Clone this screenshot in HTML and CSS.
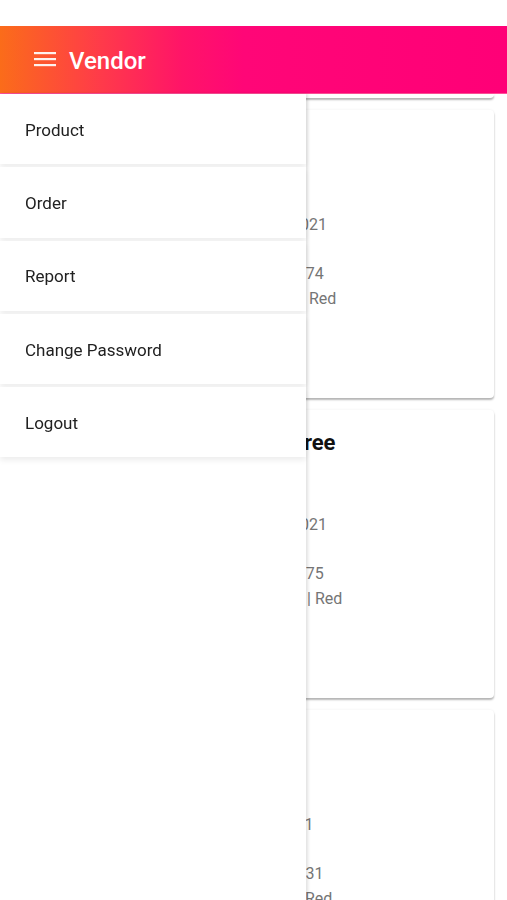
FILE: index.html
```html
<!DOCTYPE html>
<html lang="en">
<head>
    <meta charset="UTF-8">
    <meta name="viewport" content="width=device-width, initial-scale=1.0">
    <title>Vendor</title>
    <link rel="stylesheet" href="styles.css">
</head>
<body>
    <div class="status-bar"></div>

    <header class="app-bar">
        <span class="menu-icon">
            <svg width="22" height="16" viewBox="0 0 22 16">
                <rect x="0" y="0" width="22" height="2.2" fill="#fff" />
                <rect x="0" y="6" width="22" height="2.2" fill="#fff" />
                <rect x="0" y="12" width="22" height="2.2" fill="#fff" />
            </svg>
        </span>
        <span class="app-title">Vendor</span>
    </header>

    <!-- Lista de pedidos (queda detrás del menú) -->
    <main class="order-list">
        <div class="card card-cut"></div>

        <div class="card">
            <div class="thumb"></div>
            <div class="info">
                <h3 class="info-title">Lehenga</h3>
                <p class="info-line date">Date: 22/02/2021</p>
                <p class="info-line">Amount: Rs.1274</p>
                <p class="info-line">Size : 5 Meter | Red</p>
            </div>
        </div>

        <div class="card">
            <div class="thumb"></div>
            <div class="info">
                <h3 class="info-title">Printed Saree</h3>
                <p class="info-line date">Date: 24/02/2021</p>
                <p class="info-line">Amount: Rs.1275</p>
                <p class="info-line">Size: Free Size | Red</p>
            </div>
        </div>

        <div class="card">
            <div class="thumb"></div>
            <div class="info">
                <h3 class="info-title">Kurti</h3>
                <p class="info-line date">Date: 15-3-2021</p>
                <p class="info-line">Amount: Rs 1231</p>
                <p class="info-line">Size: 6 Meter | Red</p>
            </div>
        </div>
    </main>

    <!-- Menú lateral -->
    <nav class="drawer">
        <a class="drawer-item" href="#">Product</a>
        <a class="drawer-item" href="#">Order</a>
        <a class="drawer-item" href="#">Report</a>
        <a class="drawer-item" href="#">Change Password</a>
        <a class="drawer-item" href="#">Logout</a>
    </nav>
</body>
</html>
```

FILE: styles.css
```css
* {
    box-sizing: border-box;
    font-family: Roboto, 'Noto Sans', sans-serif;
}

html,
body {
    height: 100%;
}

body {
    margin: 0;
    padding: 0;
    background-color: #fff;
    color: #222;
    overflow: hidden;
}

.status-bar {
    height: 26px;
}

.app-bar {
    height: 68px;
    display: flex;
    align-items: center;
    padding-left: 34px;
    background: linear-gradient(90deg, #fb6c1a 0%, #ff3a4a 20%, #ff1468 36%, #ff0677 48%, #ff0077 100%);
    border-bottom: 1px solid #ff4f9a;
}

.menu-icon {
    display: flex;
    width: 22px;
    height: 16px;
    margin-right: 13px;
    opacity: 0.92;
}

.app-title {
    color: #fff;
    font-size: 24px;
    font-weight: 500;
    line-height: 1;
    padding-top: 2px;
}

.order-list {
    display: flex;
    flex-direction: column;
    gap: 12px;
    padding: 0 13px 0 12px;
}

.card {
    display: flex;
    gap: 16px;
    height: 288px;
    padding: 19px 16px;
    background-color: #fff;
    border-radius: 4px;
    box-shadow: 0 2px 2px rgba(0,0,0,0.28), 0 0 3px rgba(0,0,0,0.06);
}

.card-cut {
    height: 4px;
    padding: 0;
    border-radius: 0 0 4px 4px;
}

.thumb {
    width: 157px;
    height: 200px;
    background-color: #eee;
    border-radius: 4px;
}

.info {
    display: flex;
    flex-direction: column;
}

.info-title {
    margin: 0 0 55px;
    font-size: 22px;
    font-weight: 700;
    line-height: 28px;
    color: #111;
    white-space: nowrap;
}

.info-line {
    margin: 0;
    font-size: 16px;
    line-height: 25px;
    color: #757575;
    white-space: nowrap;
}

.info-line.date {
    margin-bottom: 24px;
}

.drawer {
    position: fixed;
    top: 94px;
    left: 0;
    bottom: 0;
    width: 306px;
    background-color: #fff;
    box-shadow: 2px 0 3px rgba(0,0,0,0.12);
    display: flex;
    flex-direction: column;
    gap: 3px;
}

.drawer-item {
    display: flex;
    align-items: center;
    height: 70.3px;
    padding-left: 25px;
    padding-top: 1px;
    font-size: 17px;
    color: #212121;
    text-decoration: none;
    background-color: #fff;
    box-shadow: 0 3px 6px rgba(0,0,0,0.08);
}
```
